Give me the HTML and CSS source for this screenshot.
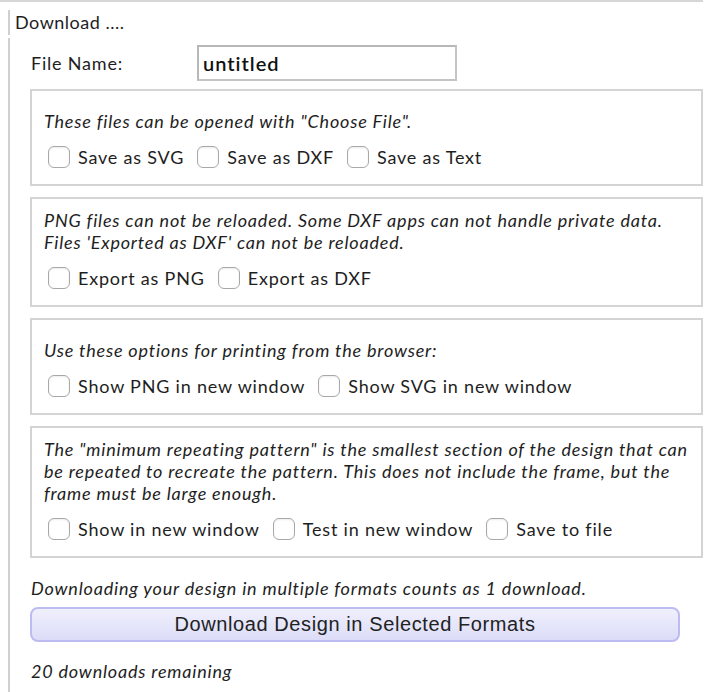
FILE: index.html
```html
<!DOCTYPE html>
<html>
<head>
<meta charset="utf-8">
<link rel="stylesheet" href="styles.css">
</head>
<body>
<div class="topline"></div>
<div class="panel">
  <div class="title">Download ....</div>
  <div class="content">
    <div class="filerow">
      <label class="filelabel">File Name:</label>
      <input class="fileinput" type="text" value="untitled">
    </div>

    <div class="box box-single">
      <p class="note">These files can be opened with "Choose File".</p>
      <div class="checks">
        <label class="check"><input type="checkbox"><span>Save as SVG</span></label>
        <label class="check"><input type="checkbox"><span>Save as DXF</span></label>
        <label class="check"><input type="checkbox"><span>Save as Text</span></label>
      </div>
    </div>

    <div class="box">
      <p class="note">PNG files can not be reloaded. Some DXF apps can not handle private data.<br>Files 'Exported as DXF' can not be reloaded.</p>
      <div class="checks">
        <label class="check"><input type="checkbox"><span>Export as PNG</span></label>
        <label class="check"><input type="checkbox"><span>Export as DXF</span></label>
      </div>
    </div>

    <div class="box box-single">
      <p class="note">Use these options for printing from the browser:</p>
      <div class="checks">
        <label class="check"><input type="checkbox"><span>Show PNG in new window</span></label>
        <label class="check"><input type="checkbox"><span>Show SVG in new window</span></label>
      </div>
    </div>

    <div class="box">
      <p class="note">The "minimum repeating pattern" is the smallest section of the design that can be repeated to recreate the pattern. This does not include the frame, but the frame must be large enough.</p>
      <div class="checks">
        <label class="check"><input type="checkbox"><span>Show in new window</span></label>
        <label class="check"><input type="checkbox"><span>Test in new window</span></label>
        <label class="check"><input type="checkbox"><span>Save to file</span></label>
      </div>
    </div>

    <p class="info">Downloading your design in multiple formats counts as 1 download.</p>
    <button class="dlbtn">Download Design in Selected Formats</button>
    <p class="info remaining">20 downloads remaining</p>
  </div>
</div>
</body>
</html>
```

FILE: styles.css
```css
html, body {
  margin: 0;
  padding: 0;
  background: #ffffff;
}
body {
  font-family: "Lato", "Noto Sans", sans-serif;
  font-size: 18px;
  letter-spacing: 0.8px;
  color: #1e1e1e;
  width: 722px;
  height: 692px;
  overflow: hidden;
}
.topline {
  width: 703px;
  height: 2px;
  background: #d6d6d6;
}
.panel {
  margin-left: 8px;
}
.title {
  margin-top: 8px;
  border-left: 2px solid #d0d0d0;
  padding-left: 5px;
  height: 25px;
  line-height: 25px;
  font-size: 18px;
  letter-spacing: 0.5px;
}
.content {
  box-sizing: border-box;
  margin-top: 3px;
  border-left: 2px solid #d0d0d0;
  padding-left: 20px;
  padding-top: 7px;
  width: 695px;
  height: 654px;
}
.filerow {
  display: flex;
  align-items: center;
  height: 36px;
  margin-bottom: 8px;
}
.filelabel {
  width: 166px;
  padding-left: 1px;
}
.fileinput {
  box-sizing: border-box;
  width: 260px;
  height: 36px;
  border: 2px solid #c4c4c4;
  border-top-color: #b8b8b8;
  border-left-color: #b8b8b8;
  padding: 0 4px;
  font-family: "Lato", "Noto Sans", sans-serif;
  font-size: 20px;
  font-weight: 600;
  letter-spacing: 1px;
  color: #111;
  background: #fff;
  outline: none;
}
.box {
  box-sizing: border-box;
  border: 2px solid #d4d4d4;
  padding: 10px 12px 16px 12px;
  margin-bottom: 11px;
}
.box-single {
  padding-top: 19px;
}
.note {
  margin: 0 0 14px 0;
  font-style: italic;
  line-height: 22px;
}
.checks {
  display: flex;
  gap: 13px;
  padding-left: 4px;
}
.check {
  display: flex;
  align-items: center;
  gap: 8px;
  height: 22px;
}
.check input {
  appearance: none;
  -webkit-appearance: none;
  margin: 0;
  width: 22px;
  height: 22px;
  box-sizing: border-box;
  border: 1px solid #a8a8a8;
  border-radius: 6px;
  background: #fff;
  box-shadow: inset 0 1px 2px rgba(0,0,0,0.08);
}
.info {
  margin: 19px 0 0 1px;
  font-style: italic;
  line-height: 22px;
}
.dlbtn {
  display: block;
  margin-top: 8px;
  box-sizing: border-box;
  width: 650px;
  height: 35px;
  border: 2px solid #bcbcf2;
  border-radius: 8px;
  background: linear-gradient(#f0f0fd, #dcdcf8);
  font-family: "Liberation Sans", Arial, sans-serif;
  font-size: 20px;
  letter-spacing: 0.6px;
  color: #222;
}
.remaining {
  margin-top: 18px;
}
```
